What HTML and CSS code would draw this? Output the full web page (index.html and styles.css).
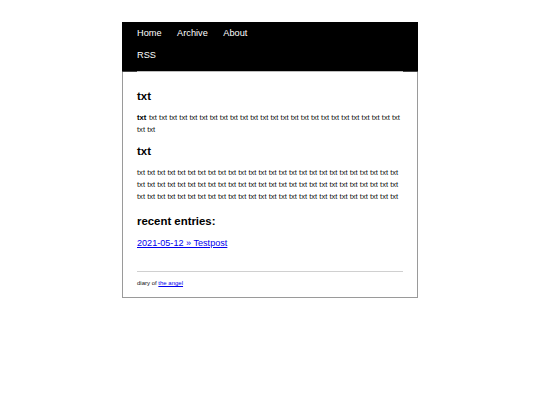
FILE: index.html
```html
<!DOCTYPE html>
<html>
<head>
<meta charset="utf-8">
<link rel="stylesheet" href="styles.css">
</head>
<body>
<div class="box">
  <header class="header">
    <div class="nav-inner">
      <nav class="nav-row">
        <a href="#">Home</a>
        <a href="#">Archive</a>
        <a href="#">About</a>
      </nav>
      <nav class="nav-row">
        <a href="#">RSS</a>
      </nav>
    </div>
  </header>
  <main class="main">
    <h2 class="title first">txt</h2>
    <p class="text"><b>txt</b> txt txt txt txt txt txt txt txt txt txt txt txt txt txt txt txt txt txt txt txt txt txt txt txt txt txt txt</p>
    <h2 class="title">txt</h2>
    <p class="text">txt txt txt txt txt txt txt txt txt txt txt txt txt txt txt txt txt txt txt txt txt txt txt txt txt txt txt txt txt txt txt txt txt txt txt txt txt txt txt txt txt txt txt txt txt txt txt txt txt txt txt txt txt txt txt txt txt txt txt txt txt txt txt txt txt txt txt txt txt txt txt txt txt txt txt txt txt txt</p>
    <h2 class="title recent">recent entries:</h2>
    <a class="entry" href="#">2021-05-12 » Testpost</a>
  </main>
  <footer class="footer">diary of <a href="#">the angel</a></footer>
</div>
</body>
</html>
```
FILE: styles.css
```css
html, body {
  margin: 0;
  padding: 0;
  background: #fff;
}
body {
  font-family: "Liberation Sans", Arial, sans-serif;
  color: #111;
}
.box {
  width: 294px;
  margin: 22px auto 0;
  border: 1px solid #9a9a9a;
  border-top: none;
  background: #fff;
}
.header {
  background: #000;
  margin: 0 -1px;
  padding: 0 15px;
  border-bottom: 1px solid #444;
}
.nav-inner {
  border-bottom: 1px solid #bdbdbd;
  margin-bottom: -1px;
  padding-bottom: 5px;
}
.nav-row {
  display: flex;
  gap: 15.6px;
  height: 22px;
  align-items: center;
}
.nav-row a {
  color: #fff;
  text-decoration: none;
  font-size: 9.2px;
  line-height: 11px;
}
.main {
  padding: 17px 14px 0;
}
.title {
  font-size: 11.4px;
  line-height: 14px;
  font-weight: bold;
  margin: 9px 0 9px;
  color: #000;
}
.title.first {
  margin-top: 0;
}
.title.recent {
  margin-top: 11.5px;
  margin-bottom: 10px;
}
.text {
  font-size: 7.6px;
  line-height: 11.7px;
  margin: 0;
}
.text b {
  color: #000;
  margin-right: 0.5px;
}
.entry {
  display: block;
  font-size: 9.1px;
  line-height: 11px;
  color: #0000ee;
}
.footer {
  margin: 22px 14px 0;
  border-top: 1px solid #d0d0d0;
  padding: 7px 0 10px;
  font-size: 6px;
  line-height: 8px;
}
.footer a {
  color: #0000ee;
}
```
